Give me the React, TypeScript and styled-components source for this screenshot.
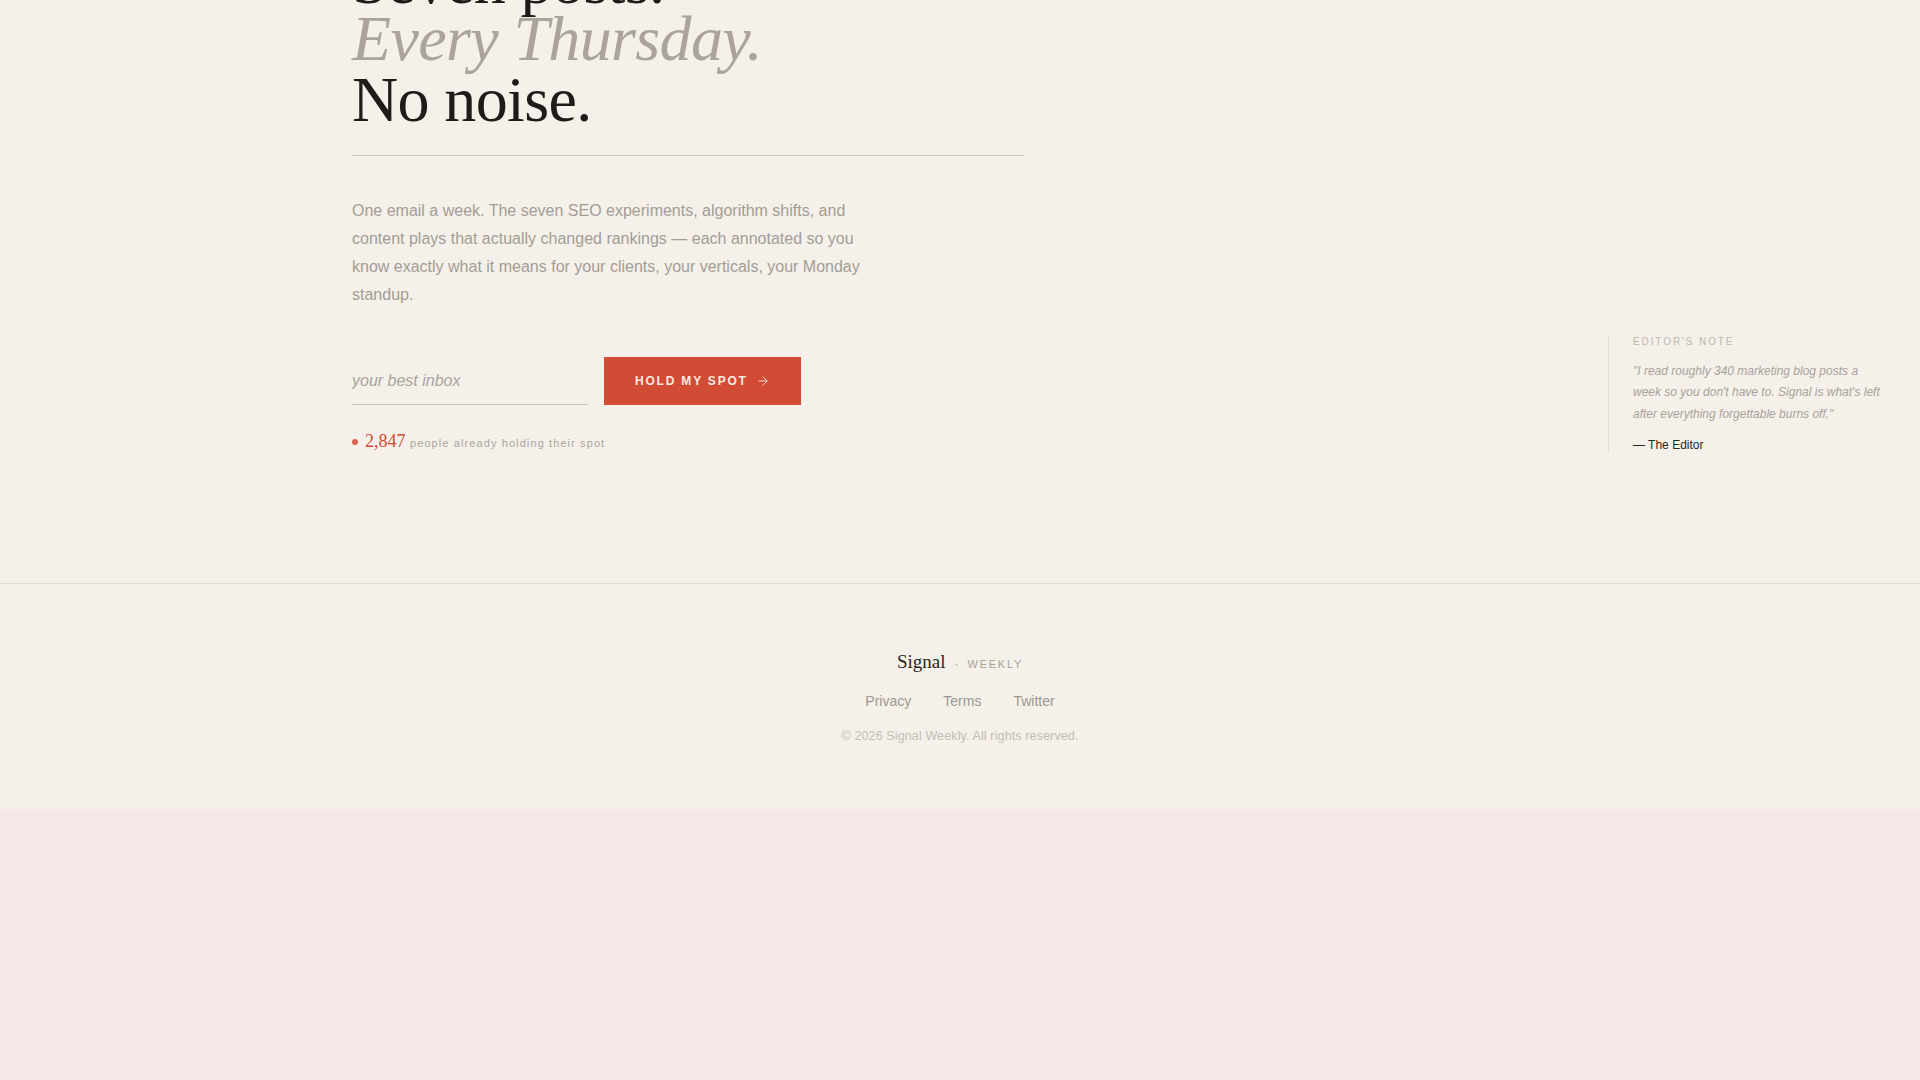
import React, { FC } from "react"
import styled, { createGlobalStyle } from "styled-components"
import { ArrowRight } from "lucide-react"

const INK = "#1f1b18"
const MUTED = "#a39d96"
const FAINT = "#bdb7b0"
const ACCENT = "#d24b34"
const PAPER = "#f5f0ea"

const SERIF = `"Liberation Serif", "Times New Roman", serif`
const SANS = `"Liberation Sans", Arial, sans-serif`

const GlobalStyle = createGlobalStyle`
  html, body {
    margin: 0;
    padding: 0;
    background: #f6e6e6;
  }
  body {
    font-family: ${SANS};
    -webkit-font-smoothing: antialiased;
  }
  * {
    box-sizing: border-box;
  }
`

const Page = styled.div`
  background: ${PAPER};
  margin-top: -48px;
`

const Main = styled.main`
  display: flex;
  align-items: flex-end;
  padding: 0 36px 128px 352px;
`

const Hero = styled.section`
  width: 672px;
`

const Headline = styled.h1`
  margin: 0;
  font-family: ${SERIF};
  font-weight: 400;
  font-size: 64px;
  line-height: 0.95;
  letter-spacing: -0.01em;
  color: ${INK};
`

const HeadlineLine = styled.span<{ $soft?: boolean; $tight?: boolean }>`
  display: block;
  font-style: ${(p) => (p.$soft ? "italic" : "normal")};
  color: ${(p) => (p.$soft ? "#aba49c" : INK)};
  margin-bottom: ${(p) => (p.$tight ? "-4px" : "0")};
`

const Rule = styled.hr`
  margin: 25px 0 0;
  border: 0;
  border-top: 1px solid #cfc9c2;
`

const Lede = styled.p`
  margin: 41px 0 0;
  max-width: 520px;
  font-size: 16px;
  line-height: 28px;
  color: ${MUTED};
`

const SignupForm = styled.form`
  display: flex;
  align-items: stretch;
  gap: 16px;
  margin-top: 48px;
  height: 48px;
`

const EmailInput = styled.input`
  width: 236px;
  padding: 0;
  border: 0;
  border-bottom: 1px solid #c8c2bb;
  background: transparent;
  font-family: ${SANS};
  font-size: 16px;
  color: ${INK};
  outline: none;

  &::placeholder {
    font-style: italic;
    color: #aaa49d;
  }
`

const SubmitButton = styled.button`
  display: inline-flex;
  align-items: center;
  gap: 8px;
  padding: 0 31px;
  border: 0;
  background: ${ACCENT};
  color: #fce9e2;
  font-family: ${SANS};
  font-weight: 700;
  font-size: 12px;
  letter-spacing: 0.15em;
  cursor: pointer;
`

const Counter = styled.p`
  display: flex;
  align-items: baseline;
  gap: 7px;
  margin: 24px 0 0;
  line-height: 24px;
`

const Dot = styled.span`
  width: 6px;
  height: 6px;
  border-radius: 50%;
  background: ${ACCENT};
  opacity: 0.85;
  align-self: center;
`

const Count = styled.span`
  font-family: ${SERIF};
  font-size: 18px;
  color: ${ACCENT};
`

const CountLabel = styled.span`
  font-size: 11px;
  letter-spacing: 0.1em;
  color: #aaa49d;
`

const Note = styled.aside`
  margin: 0 0 2px auto;
  width: 276px;
  padding-left: 24px;
  border-left: 1px solid #e2dcd5;
`

const NoteLabel = styled.div`
  font-size: 10px;
  line-height: 14px;
  letter-spacing: 0.19em;
  text-transform: uppercase;
  color: ${FAINT};
`

const NoteQuote = styled.blockquote`
  margin: 12px 0 0;
  font-style: italic;
  font-size: 12px;
  line-height: 21.6px;
  color: #a8a29b;
`

const NoteByline = styled.div`
  margin-top: 12px;
  font-size: 12px;
  line-height: 16px;
  color: #2a2622;
`

const Footer = styled.footer`
  display: flex;
  flex-direction: column;
  align-items: center;
  padding: 66px 0 65px;
  border-top: 1px solid #e3ddd6;
`

const Brand = styled.div`
  display: flex;
  align-items: baseline;
  gap: 9px;
  line-height: 24px;
`

const BrandName = styled.span`
  font-family: ${SERIF};
  font-size: 19px;
  color: #2a2622;
`

const BrandSep = styled.span`
  font-size: 12px;
  color: #a8a29b;
`

const BrandTag = styled.span`
  font-size: 11px;
  letter-spacing: 0.16em;
  color: #a8a29b;
`

const FooterLinks = styled.nav`
  display: flex;
  gap: 32px;
  margin-top: 15px;
`

const FooterLink = styled.a`
  font-size: 14px;
  line-height: 20px;
  color: #9d978f;
  text-decoration: none;
`

const Copyright = styled.p`
  margin: 17px 0 0;
  font-size: 12.5px;
  line-height: 16px;
  letter-spacing: 0.01em;
  color: #c3bdb6;
`

const links = ["Privacy", "Terms", "Twitter"]

const App: FC = () => {
  return (
    <>
      <GlobalStyle />
      <Page>
        <Main>
          <Hero>
            <Headline>
              <HeadlineLine $tight>Seven posts.</HeadlineLine>
              <HeadlineLine $soft>Every Thursday.</HeadlineLine>
              <HeadlineLine>No noise.</HeadlineLine>
            </Headline>
            <Rule />
            <Lede>
              One email a week. The seven SEO experiments, algorithm shifts, and
              content plays that actually changed rankings — each annotated so
              you know exactly what it means for your clients, your verticals,
              your Monday standup.
            </Lede>
            <SignupForm onSubmit={(e) => e.preventDefault()}>
              <EmailInput type="email" placeholder="your best inbox" />
              <SubmitButton type="submit">
                HOLD MY SPOT
                <ArrowRight size={14} strokeWidth={1.5} />
              </SubmitButton>
            </SignupForm>
            <Counter>
              <Dot />
              <span>
                <Count>2,847</Count> <CountLabel>people already holding their spot</CountLabel>
              </span>
            </Counter>
          </Hero>
          <Note>
            <NoteLabel>Editor's note</NoteLabel>
            <NoteQuote>
              "I read roughly 340 marketing blog posts a week so you don't have
              to. Signal is what's left after everything forgettable burns off."
            </NoteQuote>
            <NoteByline>— The Editor</NoteByline>
          </Note>
        </Main>
        <Footer>
          <Brand>
            <BrandName>Signal</BrandName>
            <BrandSep>·</BrandSep>
            <BrandTag>WEEKLY</BrandTag>
          </Brand>
          <FooterLinks>
            {links.map((l) => (
              <FooterLink key={l} href="#">
                {l}
              </FooterLink>
            ))}
          </FooterLinks>
          <Copyright>© 2026 Signal Weekly. All rights reserved.</Copyright>
        </Footer>
      </Page>
    </>
  )
}

export default App
